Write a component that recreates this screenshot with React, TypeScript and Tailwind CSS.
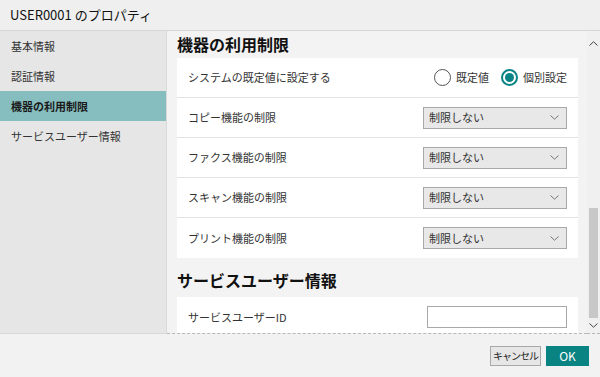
import * as React from 'react';

const menu = ['基本情報', '認証情報', '機器の利用制限', 'サービスユーザー情報'];
const limits = ['コピー機能の制限', 'ファクス機能の制限', 'スキャン機能の制限', 'プリント機能の制限'];

function Chevron({ up = false, className = '' }: { up?: boolean; className?: string }) {
  return (
    <svg width="9" height="5" viewBox="0 0 9 5" className={className}>
      <path
        d={up ? 'M0.5 4.5 L4.5 0.8 L8.5 4.5' : 'M0.5 0.5 L4.5 4.2 L8.5 0.5'}
        fill="none"
        stroke="currentColor"
        strokeWidth="1"
      />
    </svg>
  );
}

function Select() {
  return (
    <div className="flex h-[22px] w-[144px] items-center justify-between border border-[#a8a8a8] bg-[#e8e8e8] pl-[5px] pr-[7px] text-[11px] text-[#333]">
      <span>制限しない</span>
      <Chevron className="text-[#777]" />
    </div>
  );
}

export default function App() {
  const [mode, setMode] = React.useState<'default' | 'custom'>('custom');

  return (
    <div className="flex h-[377px] w-[600px] flex-col overflow-hidden bg-[#f2f2f2] font-['Noto_Sans_CJK_JP',sans-serif] text-[#222]">
      <div className="flex h-[31px] shrink-0 items-center border-b border-[#d6d6d6] bg-[#efefef] pl-[10px] text-[13px] text-[#111]">
        USER0001 のプロパティ
      </div>

      <div className="flex h-[303px] shrink-0">
        <div className="w-[167px] shrink-0 border-r border-[#d9d9d9] border-b bg-[#e6e6e6]">
          {menu.map((m, i) => (
            <div
              key={m}
              className={
                i === 2
                  ? 'flex h-[30px] items-center bg-[#86bdbf] pl-[11px] text-[11px] font-bold text-[#1a1a1a]'
                  : 'flex h-[30px] items-center pl-[11px] text-[11px] text-[#333]'
              }
            >
              {m}
            </div>
          ))}
        </div>

        <div className="flex-1 overflow-hidden border-b border-dashed border-[#b8b8b8] bg-[#f3f3f3] pl-[10px] pr-[9px]">
          <div className="h-[27px] text-[16px] font-bold leading-[27px] text-[#111]">機器の利用制限</div>
          <div className="bg-white">
            <div className="flex h-[40px] items-center justify-between border-b border-[#e2e2e2] pl-[11px] pr-[11px] text-[11px] text-[#333]">
              <span>システムの既定値に設定する</span>
              <div className="flex items-center">
                <button onClick={() => setMode('default')} className="flex items-center gap-[5px]">
                  <span
                    className={
                      mode === 'default'
                        ? 'flex h-[17px] w-[17px] items-center justify-center rounded-full border-2 border-[#0a8484] bg-white'
                        : 'flex h-[17px] w-[17px] items-center justify-center rounded-full border border-[#555] bg-white'
                    }
                  >
                    {mode === 'default' && <span className="h-[9px] w-[9px] rounded-full bg-[#0a8484]" />}
                  </span>
                  <span>既定値</span>
                </button>
                <button onClick={() => setMode('custom')} className="ml-[12px] flex items-center gap-[5px]">
                  <span
                    className={
                      mode === 'custom'
                        ? 'flex h-[17px] w-[17px] items-center justify-center rounded-full border-2 border-[#0a8484] bg-white'
                        : 'flex h-[17px] w-[17px] items-center justify-center rounded-full border border-[#555] bg-white'
                    }
                  >
                    {mode === 'custom' && <span className="h-[9px] w-[9px] rounded-full bg-[#0a8484]" />}
                  </span>
                  <span>個別設定</span>
                </button>
              </div>
            </div>
            {limits.map((l, i) => (
              <div
                key={l}
                className={
                  i < limits.length - 1
                    ? 'flex h-[40px] items-center justify-between border-b border-[#e2e2e2] pl-[11px] pr-[11px] text-[11px] text-[#333]'
                    : 'flex h-[40px] items-center justify-between pl-[11px] pr-[11px] text-[11px] text-[#333]'
                }
              >
                <span>{l}</span>
                <Select />
              </div>
            ))}
          </div>

          <div className="h-[39px] pt-[9px] text-[16px] font-bold leading-[27px] text-[#111]">サービスユーザー情報</div>
          <div className="bg-white">
            <div className="flex h-[40px] items-center justify-between pl-[11px] pr-[11px] text-[11px] text-[#333]">
              <span>サービスユーザーID</span>
              <input className="h-[22px] w-[140px] border border-[#a8a8a8] bg-white outline-none" />
            </div>
          </div>
        </div>

        <div className="flex w-[13px] shrink-0 flex-col items-center border-b border-dashed border-[#b8b8b8] bg-[#f0f0f0]">
          <div className="flex h-[24px] items-center text-[#444]">
            <Chevron up />
          </div>
          <div className="mt-[153px] h-[110px] w-[9px] bg-[#c8c8c8]" />
          <div className="flex h-[14px] items-center text-[#444]">
            <Chevron />
          </div>
        </div>
      </div>

      <div className="flex flex-1 items-center justify-end gap-[5px] pr-[11px]">
        <button className="flex h-[20px] w-[51px] items-center justify-center whitespace-nowrap border border-[#a8a8a8] bg-[#e6e6e6] text-[10px] tracking-[-1px] text-[#222]">
          キャンセル
        </button>
        <button className="flex h-[20px] w-[43px] items-center justify-center bg-[#0a8383] text-[12px] text-white">
          OK
        </button>
      </div>
    </div>
  );
}
